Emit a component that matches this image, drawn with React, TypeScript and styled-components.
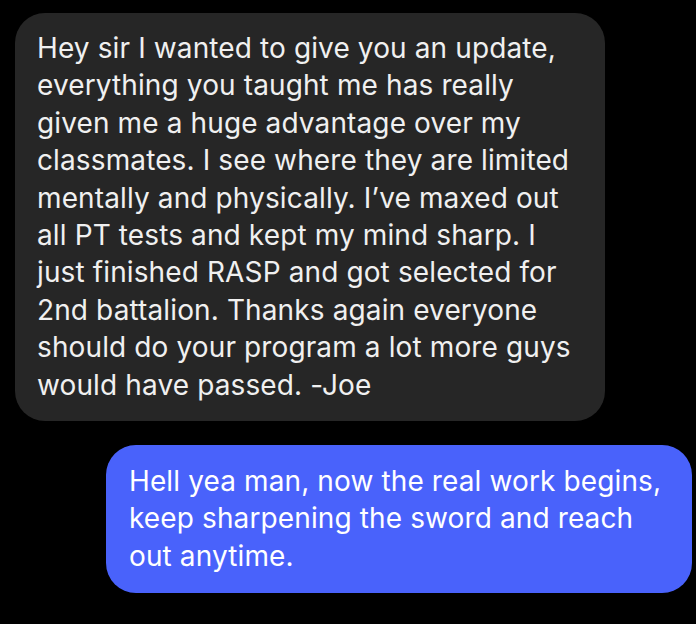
import React from "react";
import styled, { createGlobalStyle } from "styled-components";

const GlobalStyle = createGlobalStyle`
  html, body {
    margin: 0;
    padding: 0;
    background: #000000;
  }
  body {
    font-family: Inter, "Noto Sans", "Liberation Sans", sans-serif;
    -webkit-font-smoothing: antialiased;
  }
`;

const Thread = styled.div`
  width: 696px;
  height: 624px;
  box-sizing: border-box;
  background: #000000;
  display: flex;
  flex-direction: column;
  padding: 13px 4px 0 15px;
  gap: 24px;
  overflow: hidden;
`;

const Bubble = styled.div<{ $sent?: boolean }>`
  box-sizing: border-box;
  align-self: ${(p) => (p.$sent ? "flex-end" : "flex-start")};
  width: ${(p) => (p.$sent ? "586px" : "590px")};
  background: ${(p) => (p.$sent ? "#4962fb" : "#262626")};
  color: ${(p) => (p.$sent ? "#ffffff" : "#f0f0f0")};
  border-radius: 30px;
  padding: ${(p) => (p.$sent ? "18px 16px 18px 23px" : "17px 16px 17px 22px")};
  font-size: 28px;
  line-height: 37.4px;
  letter-spacing: 0.12px;
`;

const Line = styled.div`
  white-space: nowrap;
`;

const messages = [
  {
    sent: false,
    lines: [
      "Hey sir I wanted to give you an update,",
      "everything you taught me has really",
      "given me a huge advantage over my",
      "classmates. I see where they are limited",
      "mentally and physically. I\u2019ve maxed out",
      "all PT tests and kept my mind sharp. I",
      "just finished RASP and got selected for",
      "2nd battalion. Thanks again everyone",
      "should do your program a lot more guys",
      "would have passed. -Joe",
    ],
  },
  {
    sent: true,
    lines: [
      "Hell yea man, now the real work begins,",
      "keep sharpening the sword and reach",
      "out anytime.",
    ],
  },
];

const App: React.FC = () => {
  return (
    <>
      <GlobalStyle />
      <Thread>
        {messages.map((m, i) => (
          <Bubble key={i} $sent={m.sent}>
            {m.lines.map((l, j) => (
              <Line key={j}>{l}</Line>
            ))}
          </Bubble>
        ))}
      </Thread>
    </>
  );
};

export default App;
